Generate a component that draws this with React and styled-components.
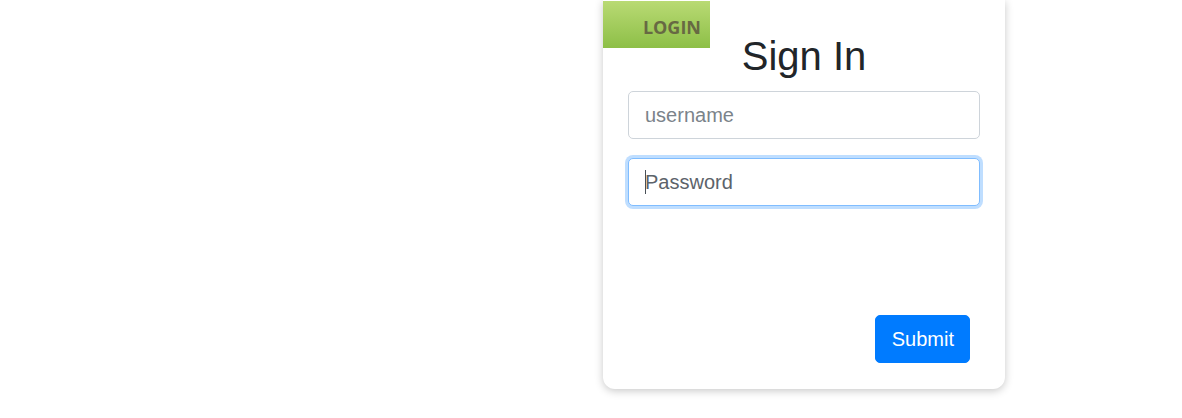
import React from 'react';
import styled, { createGlobalStyle, css } from 'styled-components';

const GlobalStyle = createGlobalStyle`
    * { box-sizing: border-box; }
    body {
        margin: 0;
        background: #fff;
        font-family: "Liberation Sans", Arial, sans-serif;
    }
`;

// 카드 하나가 오른쪽 절반에 놓이는 페이지
const Page = styled.div`
    display: grid;
    grid-template-columns: 1fr 402px 177px;
    width: 1182px;
    height: 418px;
    overflow: hidden;
`;

const Card = styled.form`
    grid-column: 2;
    position: relative;
    height: 389px;
    padding: 32px 25px 26px;
    background: #fff;
    border-radius: 0 0 12px 12px;
    box-shadow: 0 2px 8px rgba(0, 0, 0, 0.22);
    display: flex;
    flex-direction: column;
`;

const Ribbon = styled.div`
    position: absolute;
    top: 1px;
    left: 0;
    width: 107px;
    height: 47px;
    padding: 14px 9px 0 0;
    text-align: right;
    background: linear-gradient(to bottom, #b9da74, #8dbf47);
    font-family: "Open Sans", sans-serif;
    font-weight: 700;
    font-size: 18px;
    line-height: 24px;
    color: #676943;
`;

const Title = styled.h1`
    margin: 0;
    font-weight: 400;
    font-size: 40px;
    line-height: 48px;
    text-align: center;
    color: #212529;
`;

const FieldWrap = styled.div`
    position: relative;
    margin-top: ${props => props.gap}px;
`;

const Field = styled.input`
    display: block;
    width: 100%;
    height: 48px;
    padding: 8px 16px;
    font-family: "Liberation Sans", Arial, sans-serif;
    font-size: 20px;
    line-height: 30px;
    color: #495057;
    caret-color: transparent;
    background: #fff;
    border: 1px solid #ced4da;
    border-radius: 5px;
    outline: none;
    &::placeholder {
        color: #7b838a;
    }
    ${props => props.focused && css`
        border-color: #80bdff;
        box-shadow: 0 0 0 3px rgba(0, 123, 255, 0.25);
        &::placeholder {
            color: #5c636a;
        }
    `}
`;

const Caret = styled.span`
    position: absolute;
    left: 17px;
    top: 12px;
    width: 1px;
    height: 24px;
    background: #495057;
    pointer-events: none;
`;

const Actions = styled.div`
    display: flex;
    justify-content: flex-end;
    margin-top: auto;
    padding-right: 10px;
`;

const SubmitBtn = styled.button`
    height: 48px;
    padding: 8px 15px 8px 16px;
    font-family: "Liberation Sans", Arial, sans-serif;
    font-size: 20px;
    line-height: 30px;
    color: #fff;
    background: #007bff;
    border: 1px solid #007bff;
    border-radius: 5px;
    cursor: pointer;
`;

const App = () => {
    return (
        <>
            <GlobalStyle />
            <Page>
                <Card onSubmit={e => e.preventDefault()}>
                    <Ribbon>LOGIN</Ribbon>
                    <Title>Sign In</Title>
                    <FieldWrap gap={11}>
                        <Field type="text" placeholder="username" />
                    </FieldWrap>
                    <FieldWrap gap={19}>
                        <Field type="password" placeholder="Password" focused />
                        <Caret />
                    </FieldWrap>
                    <Actions>
                        <SubmitBtn type="submit">Submit</SubmitBtn>
                    </Actions>
                </Card>
            </Page>
        </>
    );
};

export default App;
